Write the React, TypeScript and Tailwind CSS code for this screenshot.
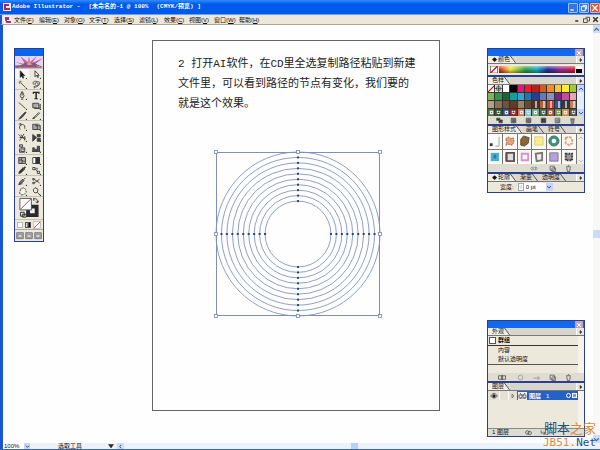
import React from "react";

const cjk = "font-['Liberation_Sans','Noto_Sans_CJK_SC',sans-serif]";

const menus = [
  ["文件", "F"], ["编辑", "E"], ["对象", "O"], ["文字", "T"], ["选择", "S"],
  ["滤镜", "L"], ["效果", "C"], ["视图", "V"], ["窗口", "W"], ["帮助", "H"],
];

type Tool = { name: string; art: React.ReactNode };

const toolGroups: Tool[][] = [
  [
    { name: "选择", art: <path d="M3 1v9l2-2 1.5 3 1.2-.6L6.300 7.500H9z" fill="#111" /> },
    { name: "直接选择", art: <path d="M4 1v8l2-2 1.500 3 1-.5L7 7h2.500z" fill="#fff" stroke="#222" /> },
    { name: "魔棒", art: <path d="M4 4l6 6M3 1v2M1 3h2M5 2l-1 1M2 5l1-1" /> },
    { name: "套索", art: <path d="M2 6C0 2 4 1 6 2s5-1 4 3-5 3-6 1 3-4 4-1-2 5-5 4M3 8v3" /> },
  ],
  [
    { name: "钢笔", art: <path d="M5 1L3 6l1 3h3l1-3-2-5zM4 11h3M5.500 2v4" /> },
    { name: "文字", art: <path d="M1 1h9v3H9L8 2.500H6.500V9.500L8 10v1H3v-1l1.500-.5V2.500H3L2 4H1z" fill="#222" stroke="none" /> },
    { name: "直线", art: <path d="M1 2l9 8" /> },
    { name: "矩形", art: <path d="M1 3h8v6H1zM3 10h8V4" fill="#aaa" /> },
    { name: "画笔", art: <path d="M10 1L4 7l-3 4 4-2 6-7" fill="#555" /> },
    { name: "铅笔", art: <path d="M1 10l2-2 6-6 1 1-6 6zM1 10l3-1" /> },
  ],
  [
    { name: "旋转", art: <path d="M3 10C0 5 5 1 9 5v4M1 3l3-1v3" /> },
    { name: "缩放", art: <path d="M1 3h6v7H1zM4 5h7v5H4M8 2l3 3" fill="#aaa" /> },
    { name: "变形", art: <path d="M1 2l4 4-3 4M4 2l5 7M8 1L5 6l5 1M2 6h4M9 4v6" /> },
    { name: "自由变换", art: <path d="M1 2l5 4-5 5zM7 2h4v3H7zM7 7h4v4H7z" fill="#444" /> },
    { name: "符号", art: <path d="M2 1h4v3H2zM4 5h5v5H4zM6 7h3M2 6v5h7" fill="#ccc" /> },
    { name: "图表", art: <path d="M1 10V5h2v5M4 10V7h2v3M7 10V3h3v7M0 10h11" fill="#555" /> },
  ],
  [
    { name: "网格", art: <path d="M1 2h9v8H1zM1 6c3-3 6 3 9 0M5 2c-2 3 2 5 0 8" fill="#aaa" /> },
    { name: "渐变", art: <><path d="M1 2h9v8H1z" fill="#fff" /><path d="M5 2h5v8H5z" fill="#333" /></> },
    { name: "吸管", art: <path d="M1 10l1-3 4-4 2 2-4 4zM6 2l3 3M7 3l2-2 1 1-2 2" fill="#333" /> },
    { name: "混合", art: <path d="M1 2h3v3H1zM4 4l4 4M7 7h3v3H7zM5 3h2v2" /> },
  ],
  [
    { name: "切片", art: <path d="M1 10l2-4 3-3 2 2-3 3zM7 4l3-3M1 10l5-1" fill="#777" /> },
    { name: "剪刀", art: <path d="M10 3L3 8M10 8L3 3M1 2h2v2H1zM1 7h2v2H1z" /> },
    { name: "抓手", art: <path d="M3 5l1-3 4-1 2 2 1 4-3 3-4 .5L2 8z" fill="#f5f3ea" strokeDasharray="3 1" /> },
    { name: "放大镜", art: <path d="M4 1l3 1 1 2-1 3-3 1-2-2V3zM7 7l4 4" /> },
  ],
];

const swatches = [
  "#ffffff", "#dddddd", "#ffffff", "#050505", "#e0187c", "#e52024", "#b51f24", "#d65a20", "#f18d22", "#f5c83a", "#fff02a", "#9dcc37",
  "#7bb65b", "#309348", "#17673b", "#169c9c", "#2ba7d4", "#2074b8", "#273f8f", "#6678b6", "#8e8ec2", "#752883", "#bd4f9e", "#e8a4b1",
  "#b3a17d", "#897157", "#705239", "#5b3d28", "#9b8266", "#69492d", "#4d3424", "#bd5b32", "#bc4131", "#335597", "#38383e", "#b9815d",
  "#497841", "#315530", "#334d87", "#8b2928", "#d37754", "#8cc1ce", "#719e83", "#3b6c45", "#a54c30", "#718a4a", "#c68f54", "#585447",
];

const stylesArt: { name: string; art: React.ReactNode }[] = [
  { name: "默认", art: <><path d="M2 2h11v11H2z" fill="#fff" /><path d="M2 10h3v3H2z" fill="#333" /><path d="M12 3v10H8" stroke="#999" fill="none" /></> },
  { name: "橙花", art: <path d="M3 5l3-2 2 2 3-1 1 4-2 4-4-1-3 1 1-3z" fill="#e5a477" stroke="#9c6043" strokeDasharray="2 1" /> },
  { name: "棕叶", art: <path d="M3 12V6l3-4 6 2-1 6-4 3z" fill="#8a6537" stroke="#4e5038" /> },
  { name: "淡黄", art: <path d="M3 3h9v9H3z" fill="#f4ed91" stroke="#d7cf7c" /> },
  { name: "绿环", art: <><circle cx="7.5" cy="7.5" r="4" fill="none" stroke="#3d9280" strokeWidth="3" /><circle cx="7.5" cy="7.5" r="5.5" fill="none" stroke="#476f68" /></> },
  { name: "橙环", art: <path d="M4 4l4-1 3 2v5l-3 2-4-2z" fill="none" stroke="#e89c72" strokeWidth="2" strokeDasharray="3 1" /> },
  { name: "水蓝", art: <><path d="M3 3h9v9H3z" fill="#4caed0" /><path d="M6 5h3v4H6z" fill="#247fa2" /></> },
  { name: "红框", art: <><path d="M4 3h8v9H4z" fill="#ddd" stroke="#555" strokeWidth="2" /><path d="M3 3v9h8" fill="none" stroke="#a5444a" /></> },
  { name: "粉框", art: <path d="M4 4h7v7H4z" fill="#fff" stroke="#db8ed1" strokeWidth="2" /> },
  { name: "灰框", art: <path d="M4 4l7-1v8l-6 1z" fill="#eee" stroke="#777" strokeWidth="2" /> },
  { name: "紫色", art: <path d="M3 3h9v9H3z" fill="#b8a1d8" stroke="#8170a5" /> },
  { name: "印章", art: <path d="M4 4h7v7H4z" fill="#999" stroke="#3b3b3b" strokeWidth="2" strokeDasharray="2 1" /> },
];

function Glyph({ children, className = "size-[9px]" }: { children: React.ReactNode; className?: string }) {
  return (
    <svg viewBox="0 0 12 12" className={className} fill="none" stroke="#333" strokeWidth="1.1" aria-hidden="true">
      {children}
    </svg>
  );
}

function PanelTitle() {
  return (
    <div className="flex h-[7px] items-center justify-end bg-[#1268ef] pr-px">
      <button aria-label="关闭面板" className="flex h-[7px] w-2 items-center justify-center bg-[#bda5c6]">
        <Glyph className="size-[6px]"><path d="M2 2l8 8M10 2l-8 8" stroke="#fff" strokeWidth="2" /></Glyph>
      </button>
    </div>
  );
}

function Tabs({ labels, dot = false }: { labels: string[]; dot?: boolean }) {
  return (
    <div className="flex h-2 items-stretch border-b border-[#777] bg-[#d8d5cc]" role="tablist">
      {labels.map((label, i) => (
        <button key={label} role="tab" aria-selected={i === 0} className={`flex items-center pl-1 text-[6px] leading-[7px] text-[#111] ${i === 0 ? "bg-[#f0eee5]" : ""}`}>
          {dot && i === 0 && <span className="mr-px text-[5px]">◆</span>}
          {label}
          <svg viewBox="0 0 6 8" className="h-[7px] w-[6px]" aria-hidden="true"><path d="M0 0l6 8V0z" fill="#d8d5cc" /><path d="M0 0l6 8" stroke="#444" /></svg>
        </button>
      ))}
      <button aria-label="面板菜单" className="ml-auto flex w-2 items-center justify-center border-l border-white bg-[#e9e6dc]">
        <Glyph className="size-[6px]"><path d="M4 3l4 3-4 3z" fill="#333" /></Glyph>
      </button>
    </div>
  );
}

function Footer({ children }: { children?: React.ReactNode }) {
  return (
    <div className="flex h-2 items-center justify-end gap-[9px] bg-[#dfdcd0] pr-3">
      {children}
      <Glyph className="size-[7px]"><path d="M2 2h7v7H2zM5 5h6v6H5z" fill="#eee" /></Glyph>
      <Glyph className="size-[7px]"><path d="M2 3h8M3 4l1 7h4l1-7M5 1h2" /></Glyph>
    </div>
  );
}

function ToolBox() {
  return (
    <aside aria-label="工具箱" className="mt-[23px] w-[30px] flex-none self-start border border-[#283f92] bg-[#ece9dc]">
      <div className="h-[7px] bg-[#0965ed]" />
      <svg viewBox="0 0 28 12" className="h-3 w-full" aria-hidden="true">
        <path d="M0 0h28v12H0z" fill="#e9d4ec" />
        <path d="M14 9L0 1l9 5L5 0l8 6 1-6 1 6 7-6-5 7 11-5-9 7 9 3H0V9l11 1-11-4z" fill="#b869ac" />
        <path d="M5 11l5-5 4 3 5-3 4 5z" fill="#8d5683" />
        <path d="M12 9l2-4 3 4z" fill="#d8aa5c" />
        <path d="M1 11l7-2M27 11l-7-3" stroke="#576f57" />
      </svg>
      <div>
        {toolGroups.map((group, i) => (
          <div key={i} className="grid grid-cols-2 border-t border-[#c6c2b3]">
            {group.map((tool) => (
              <button key={tool.name} aria-label={tool.name} className={`flex items-center justify-center ${tool.name === "选择" ? "bg-[#f8f7f0]" : ""} ${i === 2 ? "h-[11px]" : "h-[10px]"}`}>
                <Glyph>{tool.art}<path d="M12 10v2h-2z" fill="#222" stroke="none" /></Glyph>
              </button>
            ))}
          </div>
        ))}
      </div>
      <svg viewBox="0 0 28 23" className="h-[23px] w-full border-t border-[#c6c2b3]" aria-hidden="true">
        <path d="M13 10h9v9h-9z" fill="#eee" stroke="#292929" strokeWidth="4" />
        <path d="M4.500 1.500h12v12h-12z" fill="#fff" stroke="#555" />
        <path d="M5 13L16 2" stroke="#a24848" />
        <path d="M19 2c3-1 4 1 4 4M21 5l2 1 1-2M19 4V1M5 16h4v4H5zM7 18h4v3H7z" fill="none" stroke="#333" />
      </svg>
      <div className="flex h-[10px] items-center justify-evenly border-t border-[#c6c2b3]">
        <button aria-label="颜色" className="size-[6px] border border-[#bbb] bg-white" />
        <button aria-label="渐变填充" className="size-[6px] border border-[#555] bg-linear-to-r from-white to-black" />
        <button aria-label="无填充"><Glyph className="size-[8px]"><path d="M1 1h10v10H1z" fill="#fff" stroke="#aaa" /><path d="M1 11L11 1" stroke="#a22" /></Glyph></button>
      </div>
      <div className="flex h-3 items-center justify-evenly border-t border-[#aaa]">
        {["标准屏幕", "全屏带菜单", "全屏"].map((mode) => (
          <button key={mode} aria-label={mode}><Glyph className="size-[8px]"><path d="M1 1h10v9H1z" fill="#aaa" stroke="#666" /><path d="M3 4h6v4H3z" fill="#ddd" stroke="#888" /></Glyph></button>
        ))}
      </div>
    </aside>
  );
}

function Rings() {
  const radii = Array.from({ length: 10 }, (_, i) => 82 - i * 5.45);
  return (
    <svg viewBox="0 0 168 168" className="mt-9 ml-9 size-[168px]" role="img" aria-label="同心圆路径">
      <g fill="none" stroke="#7588b5" strokeWidth="0.8">
        {radii.map((r) => <circle key={r} cx="84" cy="84" r={r} />)}
        <path d="M2.500 2.500h163v163h-163z" stroke="#7f91b8" strokeWidth="1" />
      </g>
      {radii.slice(1).map((r) => (
        <g key={r} fill="#29477e">
          <rect x={83} y={83 - r} width="2" height="2" />
          <rect x={83} y={83 + r} width="2" height="2" />
          <rect x={83 - r} y={83} width="2" height="2" />
          <rect x={83 + r} y={83} width="2" height="2" />
        </g>
      ))}
      {[[2, 2], [84, 2], [166, 2], [2, 84], [166, 84], [2, 166], [84, 166], [166, 166]].map(([x, y]) => (
        <rect key={`${x}-${y}`} x={x - 1.5} y={y - 1.5} width="3" height="3" fill="#fff" stroke="#7588b5" strokeWidth="0.8" />
      ))}
    </svg>
  );
}

function RightPanels() {
  return (
    <div className="mr-2 mb-[6px] flex w-[98px] flex-none flex-col justify-between pt-[23px]">
      <div className="border border-[#283f92] bg-[#ece9dc]">
        <PanelTitle />
        <Tabs labels={["颜色"]} dot />
        <div className="flex h-[11px] items-stretch gap-px px-0.5 py-[2px]">
          <Glyph className="h-[7px] w-2"><path d="M0 0h12v12H0z" fill="#fff" /><path d="M0 12L12 0" stroke="#c00" strokeWidth="2" /></Glyph>
          <div className="flex-1 bg-[linear-gradient(to_bottom,rgba(255,255,255,.5),transparent,rgba(0,0,0,.4)),linear-gradient(to_right,#d01b22,#f6e43a_15%,#2d9c42_35%,#1ba8c5_50%,#252f93_64%,#9e288c_82%,#d01c30)]" />
          <div className="w-[6px] bg-linear-to-b from-white from-50% to-black to-50%" />
        </div>
        <div className="h-[2px] bg-[#283f92]" />
        <Tabs labels={["色样"]} />
        <div className="flex h-[31px] bg-[#333]">
          <div className="grid flex-1 grid-cols-12 grid-rows-4 gap-px">
            {swatches.map((c, i) => (
              <button key={i} aria-label={`色样 ${i + 1}`} className="overflow-hidden" style={{ backgroundColor: c }}>
                {i === 0 && <Glyph className="size-[7px]"><path d="M0 12L12 0" stroke="#c00" strokeWidth="2" /></Glyph>}
                {i === 1 && <Glyph className="size-[7px]"><path d="M6 0v12M0 6h12M3 3h6v6H3z" /></Glyph>}
                {i > 29 && i < 36 && <span className="ml-[3px] block h-full w-[2px] bg-white/60" />}
                {i > 35 && <Glyph className="size-[7px]"><path d="M4 4h4v4H4z" stroke="#eee" strokeWidth="2" strokeDasharray={i % 2 ? "2 1" : undefined} /></Glyph>}
              </button>
            ))}
          </div>
          <ScrollTrack />
        </div>
        <div className="flex h-2 items-center justify-around bg-[#dfdcd0] px-1">
          {["#333", "#66716a", "#777", "#333", "#aaa", "#888"].map((c, i) => (
            <Glyph key={i} className="size-[7px]"><path d={i === 0 ? "M1 2h6v4H1zM5 5h6v5H5z" : i === 5 ? "M3 4h6l-1 7H4zM2 3h8" : "M2 2h8v8H2zM5 5h4v4H5z"} fill={c} stroke="#555" /></Glyph>
          ))}
        </div>
        <div className="h-[2px] bg-[#283f92]" />
        <Tabs labels={["图形样式", "画笔", "符号"]} />
        <div className="flex h-[30px] bg-[#777]">
          <div className="grid flex-1 grid-cols-6 grid-rows-2 gap-px">
            {stylesArt.map((s) => (
              <button key={s.name} aria-label={s.name} className="flex items-center justify-center bg-[#faf9f3]">
                <svg viewBox="0 0 15 15" className="size-[14px]" aria-hidden="true">{s.art}</svg>
              </button>
            ))}
          </div>
          <ScrollTrack faint />
        </div>
        <Footer><Glyph className="h-[7px] w-3"><path d="M0 6l3-3v6zM5 4h4v4H5zM12 6L9 3v6z" stroke="#888" /></Glyph></Footer>
        <div className="h-[2px] bg-[#283f92]" />
        <Tabs labels={["轮廓", "渐变", "透明度"]} dot />
        <div className="flex h-[10px] items-center pl-3 text-[6px] leading-[8px]">
          <label htmlFor="stroke-width">宽度:</label>
          <span className="ml-1 flex h-2 w-[6px] items-center justify-center border border-[#9ab] bg-white">
            <Glyph className="size-[6px]"><path d="M3 5l3-3 3 3M3 7l3 3 3-3" stroke="#335" /></Glyph>
          </span>
          <select id="stroke-width" className="h-2 w-[22px] appearance-none bg-white pl-0.5 text-[6px] leading-[8px]"><option>0 pt</option></select>
          <span className="flex h-2 w-[7px] items-center justify-center bg-[#c4d5f7]"><Glyph className="size-[6px]"><path d="M2 4l4 4 4-4" stroke="#456" strokeWidth="2" /></Glyph></span>
        </div>
      </div>

      <div className="border border-[#283f92] bg-[#ece9dc]">
        <PanelTitle />
        <Tabs labels={["外观"]} />
        <div className="flex h-[37px] text-[6px] leading-[9px]">
          <ul className="flex-1">
            <li className="flex h-[10px] items-center border-b border-[#333] font-bold"><span className="mx-px mr-[2px] size-[7px] border border-[#555] bg-white" />群组</li>
            <li className="h-[9px] pl-[10px]">内容</li>
            <li className="h-[9px] pl-[10px]">默认透明度</li>
            <li className="h-px bg-[#555]" />
          </ul>
          <div className="w-[6px] bg-[#f5f3ec]" />
        </div>
        <Footer>
          <Glyph className="h-[7px] w-3"><path d="M0 3h7v6H0zM5 3h7v6H5z" /></Glyph>
          <Glyph className="size-[7px]"><circle cx="6" cy="6" r="4" stroke="#888" /></Glyph>
          <Glyph className="size-[7px]"><path d="M1 7h10M8 4l3 3-3 3" stroke="#777" /></Glyph>
        </Footer>
        <div className="h-[2px] bg-[#283f92]" />
        <Tabs labels={["图层"]} />
        <div className="flex h-[37px]">
          <div className="flex-1">
            <div className="flex h-[9px] items-center bg-[#2462c5] text-[6px] leading-[8px] text-white">
              <span className="flex h-full w-[11px] items-center justify-center bg-[#e5e1d4]"><Glyph className="size-[8px]"><path d="M1 6c3-5 7-5 10 0-3 4-7 4-10 0z" /><circle cx="6" cy="6" r="2" fill="#111" /></Glyph></span>
              <span className="h-full w-[10px] border-x border-white bg-[#e5e1d4]" />
              <button aria-label="展开图层" className="flex h-full w-2 items-center justify-center bg-[#e5e1d4]"><Glyph className="size-[6px]"><path d="M4 2l4 4-4 4z" /></Glyph></button>
              <svg viewBox="0 0 9 8" className="ml-px mr-[2px] h-2 w-[9px]" aria-hidden="true"><path d="M0 0h9v8H0z" fill="#eee" /><path d="M2 1l5 6M7 1L2 7M1 3h7v3H1z" stroke="#666" fill="none" /></svg>
              <span className="font-bold">图层</span><span className="ml-[5px]">1</span>
              <span className="mr-px ml-auto size-[5px] rounded-full border border-white" />
              <span className="mr-px size-[5px] border border-white bg-[#6c9cf0]" />
            </div>
          </div>
          <div className="w-[6px] bg-[#f5f3ec]" />
        </div>
        <div className="flex h-2 items-center border-t border-[#888] bg-[#dfdcd0] pl-1 text-[6px] leading-[7px]">
          <span>1 图层</span>
          <Glyph className="ml-4 size-[7px]"><circle cx="4" cy="6" r="3" /><circle cx="8" cy="7" r="3" /></Glyph>
          <Glyph className="ml-2 size-[7px]"><path d="M2 2v5h6M6 5l3 2-3 3" /></Glyph>
        </div>
      </div>
    </div>
  );
}

function ScrollTrack({ faint = false }: { faint?: boolean }) {
  return (
    <div className={`ml-px flex w-[7px] flex-col justify-between ${faint ? "bg-[#f1efe8]" : "bg-[#e5edfc]"}`}>
      {["M2 8l4-4 4 4", "M2 4l4 4 4-4"].map((d) => (
        <span key={d} className={`flex h-[7px] items-center justify-center ${faint ? "" : "bg-[#c2d4fa]"}`}><Glyph className="size-[6px]"><path d={d} stroke={faint ? "#bbb" : "#456092"} strokeWidth="2" /></Glyph></span>
      ))}
    </div>
  );
}

export default function App() {
  return (
    <div className={`relative flex h-screen flex-col overflow-hidden border-b border-[#3c64a8] bg-[#fdfefd] text-[#111] ${cjk}`}>
      <header className="flex h-[15px] flex-none items-center border-b border-[#6ca0f5] bg-linear-to-b from-[#308bff] via-[#0059e8] via-30% to-[#005bed] pl-[3px] font-['Liberation_Mono','Noto_Sans_CJK_SC',monospace] text-[6px] leading-[8px] font-bold text-white">
        <svg viewBox="0 0 8 8" className="mr-px size-2" aria-hidden="true"><path d="M0 0h8v8H0z" fill="#f7e7ee" /><path d="M1 1h5v2H3v2h4v2H1z" fill="#a92762" /></svg>
        <h1 className="flex gap-2 whitespace-pre"><span>Adobe Illustrator -</span><span>[未命名的-1 @ 100%</span><span>(CMYK/预览) ]</span></h1>
        <div className="ml-auto flex gap-px pt-px">
          <button aria-label="最小化" className="size-[10px] rounded-[1px] border border-[#9cc1ff] bg-[#3974df]"><Glyph className="size-2"><path d="M2 9h5" stroke="#fff" strokeWidth="2" /></Glyph></button>
          <button aria-label="还原" className="size-[10px] rounded-[1px] border border-[#9cc1ff] bg-[#3974df]"><Glyph className="size-2"><path d="M2 4h6v6H2zM4 2h6v6" stroke="#fff" strokeWidth="1.500" /></Glyph></button>
          <button aria-label="关闭" className="size-[10px] rounded-[1px] border border-[#eeb0a0] bg-[#e05432]"><Glyph className="size-2"><path d="M2 2l8 8M10 2l-8 8" stroke="#fff" strokeWidth="2" /></Glyph></button>
        </div>
      </header>
      <nav aria-label="主菜单" className="flex h-[10px] flex-none items-center border-b border-[#aaa69b] border-l-2 border-l-[#1857cf] bg-[#ece7d8] pl-0.5 text-[6px] leading-[8px]">
        <svg viewBox="0 0 8 8" className="mr-0.5 size-2" aria-hidden="true"><path d="M0 0h6l2 2v6H0z" fill="#f8f1f4" /><path d="M1 1h4v3H3v1h4v2H2V5H1z" fill="#a33570" /></svg>
        {menus.map(([label, key]) => (
          <button key={label} className="w-[25px] flex-none text-left whitespace-nowrap">{label}(<u>{key}</u>)</button>
        ))}
        <div className="ml-auto flex">
          <button aria-label="最小化文档"><Glyph><path d="M3 8h4" strokeWidth="2" /></Glyph></button>
          <button aria-label="还原文档"><Glyph><path d="M2 5h5v5H2zM5 3h5v5H8" /></Glyph></button>
          <button aria-label="关闭文档"><Glyph><path d="M3 3l6 6M9 3l-6 6" strokeWidth="2" /></Glyph></button>
        </div>
      </nav>

      <main className="flex min-h-0 flex-1 border-l-[3px] border-[#1857cf] pl-[11px]">
        <ToolBox />
        <section aria-label="画板" className="mt-[15px] mr-[47px] mb-8 ml-[108px] flex-1 border border-[#666] pt-[13px] pl-[25px]">
          <p className="font-['Liberation_Mono','Noto_Sans_CJK_SC',monospace] text-[11px] leading-[20px] whitespace-nowrap text-[#222]">
            2 打开AI软件，在CD里全选复制路径粘贴到新建<br />
            文件里，可以看到路径的节点有变化，我们要的<br />
            就是这个效果。
          </p>
          <Rings />
        </section>
        <RightPanels />
        <div aria-hidden="true" className="flex w-[7px] flex-none flex-col justify-between bg-[#f8f9f7]">
          <span className="flex h-2 items-center justify-center bg-[#cbdcfb]"><Glyph className="size-[7px]"><path d="M2 8l4-4 4 4" stroke="#45648f" strokeWidth="2" /></Glyph></span>
          <span className="h-2 bg-[#cbdcfb]" />
          <span className="flex h-2 items-center justify-center bg-[#cbdcfb]"><Glyph className="size-[7px]"><path d="M2 4l4 4 4-4" stroke="#45648f" strokeWidth="2" /></Glyph></span>
        </div>
      </main>

      <footer className="flex h-[6px] flex-none items-center border-l-[3px] border-[#1857cf] bg-[#eef1f5] text-[6px] leading-[6px]">
        <select aria-label="缩放比例" className="h-[6px] w-[21px] appearance-none bg-white pl-px text-[6px] leading-[6px]"><option>100%</option></select>
        <span className="flex h-[6px] w-[6px] items-center justify-center bg-[#c4d5f7]"><Glyph className="size-[5px]"><path d="M2 4l4 4 4-4" strokeWidth="2" /></Glyph></span>
        <span className="ml-7">选取工具</span>
        <button aria-label="状态菜单" className="ml-[26px] flex h-[6px] items-center"><Glyph className="size-[6px]"><path d="M1 3h10L6 10z" fill="#222" /></Glyph></button>
        <span className="ml-[3px] flex h-[6px] w-[7px] items-center justify-center bg-[#cbdcfb]"><Glyph className="size-[5px]"><path d="M8 2L4 6l4 4" strokeWidth="2" /></Glyph></span>
        <div className="flex h-[6px] flex-1 justify-center bg-[#edf3fd] pr-4"><span className="w-[7px] bg-[#b9cdfa]" /></div>
      </footer>

      <div className="absolute right-1 bottom-0 text-right text-[#1d4f82]">
        <div className="text-[13px] leading-[15px]">脚本<span className="text-[#e08a3c]">之家</span></div>
        <div className="font-['DejaVu_Sans_Mono',monospace] text-[11px] leading-[13px]"><span className="text-[#e08a3c]">JB51.</span>Net</div>
      </div>
    </div>
  );
}
